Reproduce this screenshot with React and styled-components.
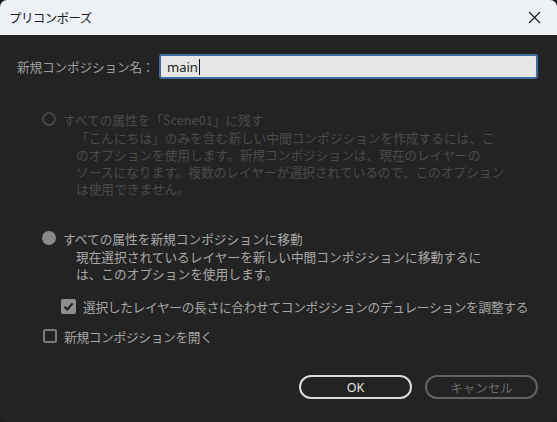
import React from "react";
import styled, { createGlobalStyle } from "styled-components";

const GlobalStyle = createGlobalStyle`
  html, body {
    margin: 0;
    padding: 0;
    background: #1b1b1b;
  }
  #root {
    height: 100vh;
  }
`;

const jp = `"Noto Sans CJK JP", "Noto Sans", sans-serif`;

const Window = styled.div`
  height: 100vh;
  box-sizing: border-box;
  display: flex;
  flex-direction: column;
  background: #232323;
  border-radius: 7px;
  overflow: hidden;
  font-family: ${jp};
`;

const TitleBar = styled.div`
  height: 35px;
  flex: none;
  display: flex;
  align-items: center;
  justify-content: space-between;
  padding: 0 14px 0 9px;
  background: #eef2f7;
  color: #1a1a1a;
`;

const Title = styled.span`
  font-size: 12.5px;
  letter-spacing: -0.6px;
`;

const CloseButton = styled.button`
  width: 18px;
  height: 18px;
  padding: 0;
  border: none;
  background: transparent;
  display: flex;
  align-items: center;
  justify-content: center;
  cursor: pointer;
`;

const Body = styled.div`
  flex: 1;
  display: flex;
  flex-direction: column;
  padding: 19px 19px 23px 17px;
  font-size: 12.7px;
`;

const NameRow = styled.div`
  display: flex;
  align-items: center;
  height: 25px;
`;

const NameLabel = styled.label`
  width: 142px;
  flex: none;
  color: #9e9e9e;
  letter-spacing: -0.2px;
`;

const TextField = styled.div`
  flex: 1;
  height: 25px;
  box-sizing: border-box;
  display: flex;
  align-items: center;
  padding: 0 6px;
  background: #e6e6e6;
  border: 2px solid #3d6ba3;
  border-radius: 3px;
  font-family: "Noto Sans", "Liberation Sans", sans-serif;
  font-size: 13px;
  color: #1c1c1c;
`;

const Caret = styled.span`
  width: 1px;
  height: 16px;
  margin-left: 1px;
  background: #111;
`;

const OptionGroup = styled.div`
  margin: ${(p) => p.$top}px 0 0 25px;
`;

const RadioRow = styled.div`
  display: flex;
  align-items: center;
  gap: 7px;
  height: 18px;
  white-space: nowrap;
  color: ${(p) => (p.$disabled ? "#4b4b4b" : "#a9a9a9")};
`;

const RadioDot = styled.span`
  width: 14px;
  height: 14px;
  box-sizing: border-box;
  border-radius: 50%;
  flex: none;
  border: 2px solid ${(p) => (p.$disabled ? "#464646" : "#8a8a8a")};
  background: ${(p) => (p.$filled ? "#8a8a8a" : "transparent")};
`;

const Description = styled.p`
  margin: 1px 0 0 34px;
  line-height: 17px;
  white-space: nowrap;
  color: ${(p) => (p.$disabled ? "#4b4b4b" : "#a9a9a9")};
`;

const CheckRow = styled.div`
  display: flex;
  align-items: center;
  gap: ${(p) => p.$gap}px;
  height: 18px;
  white-space: nowrap;
  letter-spacing: -0.3px;
  margin: ${(p) => p.$top}px 0 0 ${(p) => p.$left}px;
  color: #a6a6a6;
`;

const CheckBox = styled.span`
  width: ${(p) => p.$size}px;
  height: ${(p) => p.$size}px;
  box-sizing: border-box;
  flex: none;
  display: flex;
  align-items: center;
  justify-content: center;
  border-radius: 2px;
  border: 2px solid ${(p) => (p.$checked ? "#8e8e8e" : "#7a7a7a")};
  background: ${(p) => (p.$checked ? "#8e8e8e" : "transparent")};
`;

const ButtonBar = styled.div`
  margin-top: auto;
  display: flex;
  justify-content: flex-end;
  gap: 13px;
`;

const Button = styled.button`
  width: 113px;
  height: 24px;
  box-sizing: border-box;
  border-radius: 12px;
  background: transparent;
  border: 2px solid ${(p) => (p.$primary ? "#dcdcdc" : "#626262")};
  color: ${(p) => (p.$primary ? "#e4e4e4" : "#6c6c6c")};
  font-family: ${(p) => (p.$primary ? `"Noto Sans", "Liberation Sans", sans-serif` : jp)};
  font-size: 12.5px;
  padding: 0;
  cursor: pointer;
`;

const CloseIcon = () => (
  <svg width="13" height="13" viewBox="0 0 13 13">
    <path d="M1 1 L12 12 M12 1 L1 12" stroke="#1a1a1a" strokeWidth="1.1" fill="none" />
  </svg>
);

const CheckIcon = () => (
  <svg width="11" height="11" viewBox="0 0 11 11">
    <path d="M1.5 5.8 L4.3 8.5 L9.6 2.4" stroke="#1e1e1e" strokeWidth="2" fill="none" />
  </svg>
);

export default function App() {
  return (
    <>
      <GlobalStyle />
      <Window>
        <TitleBar>
          <Title>プリコンポーズ</Title>
          <CloseButton aria-label="閉じる">
            <CloseIcon />
          </CloseButton>
        </TitleBar>
        <Body>
          <NameRow>
            <NameLabel>新規コンポジション名：</NameLabel>
            <TextField>
              main
              <Caret />
            </TextField>
          </NameRow>

          <OptionGroup $top={31}>
            <RadioRow $disabled>
              <RadioDot $disabled />
              すべての属性を「Scene01」に残す
            </RadioRow>
            <Description $disabled>
              「こんにちは」のみを含む新しい中間コンポジションを作成するには、こ
              <br />
              のオプションを使用します。新規コンポジションは、現在のレイヤーの
              <br />
              ソースになります。複数のレイヤーが選択されているので、このオプション
              <br />
              は使用できません。
            </Description>
          </OptionGroup>

          <OptionGroup $top={32}>
            <RadioRow>
              <RadioDot $filled />
              すべての属性を新規コンポジションに移動
            </RadioRow>
            <Description>
              現在選択されているレイヤーを新しい中間コンポジションに移動するに
              <br />
              は、このオプションを使用します。
            </Description>
          </OptionGroup>

          <CheckRow $top={15} $left={44} $gap={7}>
            <CheckBox $checked $size={15}>
              <CheckIcon />
            </CheckBox>
            選択したレイヤーの長さに合わせてコンポジションのデュレーションを調整する
          </CheckRow>

          <CheckRow $top={12} $left={26} $gap={7}>
            <CheckBox $size={14} />
            新規コンポジションを開く
          </CheckRow>

          <ButtonBar>
            <Button $primary>OK</Button>
            <Button>キャンセル</Button>
          </ButtonBar>
        </Body>
      </Window>
    </>
  );
}
